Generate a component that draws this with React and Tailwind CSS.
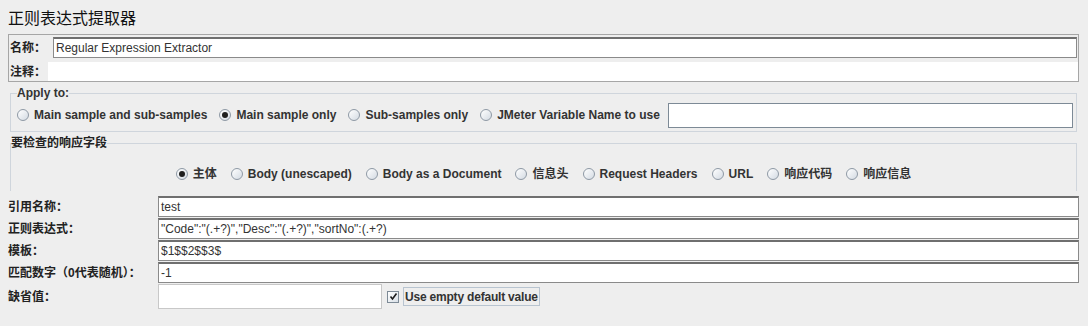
import React from 'react';

const FONT = { fontFamily: '"Liberation Sans", "Noto Sans CJK SC", sans-serif' };

// Swing-ish radio button
const Radio = ({ label, checked }) => (
  <label className="flex items-center gap-[5px] text-[12px] font-bold text-[#333] whitespace-nowrap">
    <span className="relative w-[12px] h-[12px] rounded-full border border-[#8e99a5] bg-gradient-to-br from-white to-[#d4dbe3] flex items-center justify-center">
      {checked && <span className="w-[6px] h-[6px] rounded-full bg-[#1e1e1e]" />}
    </span>
    <span>{label}</span>
  </label>
);

const Field = ({ value, className = '' }) => (
  <div className={`bg-white border border-[#8a8a8a] border-t-[#6f6f6f] border-t-2 flex items-center pl-[2px] text-[12px] text-[#333] ${className}`}>
    {value}
  </div>
);

const Row = ({ label, children, h = 'h-[21px]' }) => (
  <div className={`flex ${h} mb-[1px]`}>
    <div className="w-[150px] text-[12px] font-bold text-[#222] flex items-center whitespace-nowrap">{label}</div>
    {children}
  </div>
);

export default function App() {
  return (
    <div className="w-[1088px] h-[326px] bg-[#eeeeee] overflow-hidden px-[8px]" style={FONT}>
      {/* title */}
      <div className="h-[34px] pt-[8px] text-[16px] leading-[22px] text-[#111]">正则表达式提取器</div>

      {/* name / comment */}
      <div className="w-[1071px] h-[48px] border border-[#a6a6a6]">
        <div className="flex h-[24px] pt-[2px]">
          <div className="w-[44px] pl-[1px] text-[12px] font-bold text-[#222] flex items-center">名称：</div>
          <Field value="Regular Expression Extractor" className="flex-1 h-[21px] mr-[1px]" />
        </div>
        <div className="flex h-[22px] pt-[3px]">
          <div className="w-[39px] pl-[1px] text-[12px] font-bold text-[#222] flex items-center">注释：</div>
          <div className="flex-1 bg-white" />
        </div>
      </div>

      {/* apply to */}
      <fieldset className="mx-[2px] mt-[4px] w-[1067px] min-w-0 h-[46px] border border-[#cfd5dc] pl-[6px] pr-[3px]">
        <legend className="text-[12px] font-bold text-[#333] leading-[14px]">Apply to:</legend>
        <div className="flex items-center h-[32px] -mt-[1px]">
          <div className="flex items-center gap-[12px] shrink-0">
            <Radio label="Main sample and sub-samples" />
            <Radio label="Main sample only" checked />
            <Radio label="Sub-samples only" />
            <Radio label="JMeter Variable Name to use" />
          </div>
          <div className="ml-[8px] flex-1 min-w-0 h-[25px] bg-white border border-[#7d8a96] mt-[1px]" />
        </div>
      </fieldset>

      {/* response field */}
      <fieldset className="mx-[2px] mt-[4px] w-[1067px] min-w-0 h-[55px] border border-[#cfd5dc] border-b-0">
        <legend className="text-[12px] font-bold text-[#222] leading-[14px]">要检查的响应字段</legend>
        <div className="flex items-center justify-center gap-[14px] h-[42px] pt-[5px]">
          <Radio label="主体" checked />
          <Radio label="Body (unescaped)" />
          <Radio label="Body as a Document" />
          <Radio label="信息头" />
          <Radio label="Request Headers" />
          <Radio label="URL" />
          <Radio label="响应代码" />
          <Radio label="响应信息" />
        </div>
      </fieldset>

      {/* rows */}
      <div className="mt-[5px]">
        <Row label="引用名称：">
          <Field value="test" className="w-[921px]" />
        </Row>
        <Row label="正则表达式：">
          <Field value={'"Code":"(.+?)","Desc":"(.+?)","sortNo":(.+?)'} className="w-[921px]" />
        </Row>
        <Row label="模板：">
          <Field value="$1$$2$$3$" className="w-[921px]" />
        </Row>
        <Row label="匹配数字（0代表随机）：">
          <Field value="-1" className="w-[921px]" />
        </Row>
        <Row label="缺省值：" h="h-[25px]">
          <div className="w-[224px] h-[25px] bg-white border border-[#c8c8c8]" />
          <div className="flex items-center ml-[5px]">
            <span className="w-[12px] h-[12px] border border-[#7d8a96] bg-gradient-to-br from-white to-[#d9e0e7] flex items-center justify-center">
              <svg width="9" height="9" viewBox="0 0 9 9">
                <path d="M1.5 4.5 L3.5 7 L7.5 1.5" fill="none" stroke="#1c1c1c" strokeWidth="1.6" />
              </svg>
            </span>
            <span className="ml-[4px] h-[19px] px-[1px] border border-[#b8c4d0] flex items-center text-[12px] font-bold text-[#333] tracking-[-0.2px]">
              Use empty default value
            </span>
          </div>
        </Row>
      </div>
    </div>
  );
}
